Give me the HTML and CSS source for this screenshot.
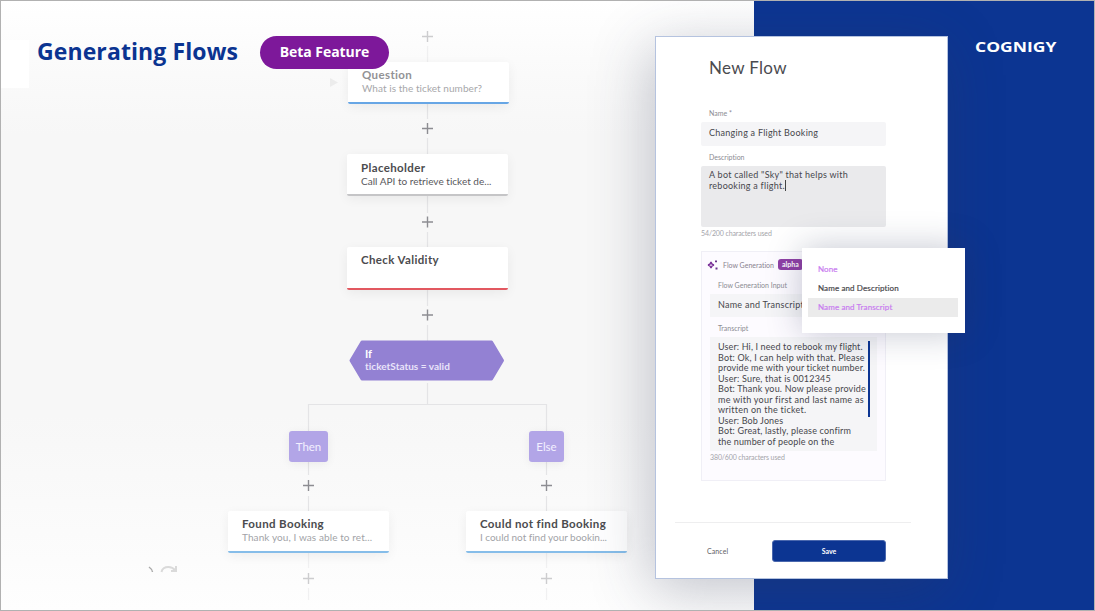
FILE: index.html
```html
<!DOCTYPE html>
<html lang="en">
<head>
<meta charset="utf-8">
<title>Generating Flows</title>
<link rel="stylesheet" href="styles.css">
</head>
<body>
<main class="slide">
  <section class="canvas">
    <div class="patch"></div>
    <svg class="wires" width="753" height="609" viewBox="1 1 753 609" fill="none">
      <g stroke="#e4e4e6" stroke-width="1.2">
        <path d="M427.500 104V119M427.500 138V154M427.500 196V213M427.500 232V247M427.500 290V306M427.500 325V341M427.500 383V404M308.500 432V404.500H546.500V432M308.500 462V475M308.500 496V511M546.500 462V475M546.500 496V511"/>
        <path opacity=".5" d="M427.500 46V62M308.500 553V568M308.500 588V600M546.500 553V568M546.500 588V600"/>
      </g>
      <g stroke="#8d8d92" stroke-width="1.400">
        <path d="M422 128.500h11M427.500 123v11M422 222h11M427.500 216.500v11M422 315h11M427.500 309.500v11M303 485.500h11M308.500 480v11M541 485.500h11M546.500 480v11"/>
        <path opacity=".43" d="M422 36.500h11M427.500 31v11M303 578.500h11M308.500 573v11M541 578.500h11M546.500 573v11"/>
      </g>
      <path fill="#ececec" d="M330 78l8 4.500-8 4.500z"/>
      <path stroke="#aaa" stroke-width="1.500" d="M149 567q3 2 3.500 5"/>
      <path stroke="#dadada" stroke-width="2" d="M161.500 572q1-5 7-5 4 0 7 3.500M176 566v5h-5"/>
      <path fill="#9381d3" stroke="#9381d3" stroke-width="3" stroke-linejoin="round" d="M362 342H491.500L502.500 360.500 491.500 379H362L351 360.500z"/>
    </svg>
    <article class="node question"><h2>Question</h2><p>What is the ticket number?</p></article>
    <article class="node placeholder"><h2>Placeholder</h2><p>Call API to retrieve ticket de...</p></article>
    <article class="node validity"><h2>Check Validity</h2></article>
    <div class="condition"><h2>If</h2><p>ticketStatus = valid</p></div>
    <div class="branch then">Then</div>
    <div class="branch else">Else</div>
    <article class="node found"><h2>Found Booking</h2><p>Thank you, I was able to ret...</p></article>
    <article class="node missing"><h2>Could not find Booking</h2><p>I could not find your bookin...</p></article>
    <header class="heading"><h1>Generating Flows</h1><span class="beta">Beta Feature</span></header>
  </section>
  <aside class="brand"><span class="logo">COGNIGY</span></aside>

  <section class="modal">
    <h2 class="modal-title">New Flow</h2>
    <form class="form">
      <label class="label">Name *</label>
      <div class="field name">Changing a Flight Booking</div>
      <label class="label desc-label">Description</label>
      <div class="field description">A bot called "Sky" that helps with<br><span class="caret">rebooking a flight.</span></div>
      <small class="count">54/200 characters used</small>
      <div class="generation">
        <div class="gen-head">
          <svg width="12" height="12" viewBox="0 0 12 12"><path d="M4 3Q4.500 5.500 7 6 4.500 6.500 4 9 3.500 6.500 1 6 3.500 5.500 4 3z" fill="none" stroke="#7b3299" stroke-width="1.400"/><path fill="#6d358c" d="M8 1.500h2v1.800H8zM8.500 8.500h2v2h-2z"/></svg>
          <span>Flow Generation</span><b class="alpha">alpha</b>
        </div>
        <label class="label gen-label">Flow Generation Input</label>
        <div class="select">Name and Transcript</div>
        <label class="label gen-label transcript-label">Transcript</label>
        <div class="transcript">
          <div class="lines">
            <span class="snug">User: Hi, I need to rebook my flight.</span>
            <span>Bot: Ok, I can help with that. Please</span>
            <span class="snug">provide me with your ticket number.</span>
            <span>User: Sure, that is 0012345</span>
            <span>Bot: Thank you. Now please provide</span>
            <span class="wide">me with your first and last name as</span>
            <span class="wide">written on the ticket.</span>
            <span class="snug">User: Bob Jones</span>
            <span>Bot: Great, lastly, please confirm</span>
            <span class="snug">the number of people on the</span>
          </div>
          <i class="scrollbar"></i>
        </div>
        <small class="count gen-count">380/600 characters used</small>
      </div>
    </form>
    <footer class="actions"><span class="cancel">Cancel</span><button class="save">Save</button></footer>
  </section>

  <ul class="menu">
    <li class="accent none">None</li>
    <li>Name and Description</li>
    <li class="accent active">Name and Transcript</li>
  </ul>
</main>
</body>
</html>
```
FILE: styles.css
```css
* { box-sizing: border-box; }
body { margin: 0; font-family: Lato, "Open Sans", sans-serif; font-variant-ligatures: none; }
h1, h2, p, ul { margin: 0; padding: 0; }

.slide {
  position: relative;
  display: grid;
  grid-template-columns: 753px 1fr;
  width: 1095px;
  height: 611px;
  border: 1px solid #b1b1b1;
  overflow: hidden;
}
.canvas {
  position: relative;
  background: linear-gradient(#fff, #fafafa 12%, #f7f7f7 22%, #f7f7f7 68%, #fcfcfc 92%, #fefefe);
}
.patch { position: absolute; top: 39px; width: 28px; height: 48px; background: #fff; }
.wires { position: absolute; left: 0; top: 0; }
.heading { position: relative; display: flex; align-items: center; gap: 22px; padding: 35px 0 0 36px; }
.heading h1 { font: 700 23px/30px "Open Sans", sans-serif; height: 33px; color: #0b3491; letter-spacing: .1px; width: 201px; white-space: nowrap; }
.beta {
  width: 129px;
  height: 33px;
  border-radius: 17px;
  background: #7d189a;
  color: #fff;
  font: 700 14px/32px "Open Sans", sans-serif;
  text-align: center;
  letter-spacing: -.05px;
}

.node {
  position: absolute;
  width: 161px;
  height: 42px;
  padding: 7px 14px;
  border-radius: 2px;
  background: #fff;
  border-bottom: 2px solid #c5c5c7;
  box-shadow: 0 3px 12px rgba(0, 0, 0, .06);
  white-space: nowrap;
}
.node h2 { font-size: 11.5px; line-height: 14px; font-weight: 700; color: #4b4b4e; letter-spacing: .37px; }
.node p { font-size: 10px; line-height: 13px; color: #58585c; letter-spacing: .02px; }
.question { left: 347px; top: 61px; padding-top: 6px; border-color: #67a6e5; }
.question h2 { color: #929295; }
.question p { color: #a7a7aa; letter-spacing: .06px; }
.placeholder { left: 346px; top: 153px; }
.validity { left: 346px; top: 246px; height: 43px; padding-top: 6px; border-color: #e25860; }
.found { left: 227px; top: 510px; padding-top: 6px; border-color: #86bde9; }
.missing { left: 465px; top: 510px; padding-top: 6px; border-color: #86bde9; }
.found p, .missing p { color: #a2a3a7; }
.found p { letter-spacing: .1px; }
.missing p { letter-spacing: -.03px; }

.condition { position: absolute; left: 364px; top: 346px; color: #fff; white-space: nowrap; }
.condition h2 { font-size: 11px; line-height: 13px; }
.condition p { font-size: 10px; line-height: 13px; font-weight: 700; color: #e9e4fa; letter-spacing: .03px; }
.branch {
  position: absolute;
  top: 430px;
  height: 31px;
  border-radius: 3px;
  background: #b2a5e7;
  color: #f3f0ff;
  font-size: 11.5px;
  line-height: 32px;
  text-align: center;
  box-shadow: 0 2px 10px rgba(0, 0, 0, .06);
}
.then { left: 288px; width: 39px; }
.else { left: 528px; width: 35px; }

.brand { background: #0c3592; padding: 37px 0 0 221px; }
.logo {
  display: block;
  width: 84px;
  color: #fff;
  font: 700 14px/17px "Open Sans", sans-serif;
  transform: scaleX(1.25);
  transform-origin: left;
}

.modal {
  position: absolute;
  left: 654px;
  top: 35px;
  width: 293px;
  height: 543px;
  display: flex;
  flex-direction: column;
  border: 1px solid #b5c3df;
  background: #fff;
  box-shadow: -5px 12px 55px rgba(50, 60, 85, .29);
}
.modal-title { padding: 20px 0 0 53px; font-size: 17px; line-height: 22px; font-weight: 400; color: #4b4b4f; letter-spacing: .32px; }
.form { width: 230px; padding: 29px 0 0 45px; }
.label { display: block; height: 14px; padding-left: 8px; font-size: 7px; line-height: 10px; color: #8b8b92; }
.field { padding-left: 8px; border-radius: 2px; background: #f5f5f7; color: #47474c; font-size: 9px; letter-spacing: .25px; }
.name { height: 24px; line-height: 22px; }
.desc-label { margin-top: 6px; }
.description { height: 61px; padding-top: 4px; background: #eaeaec; line-height: 10.5px; }
.caret { border-right: 1px solid #444; }
.count { display: block; font-size: 7px; line-height: 12px; color: #a4a4aa; letter-spacing: -.12px; }

.generation { height: 230px; margin-top: 12px; padding: 6px 8px 0 8px; border: 1px solid #f0eff6; background: #fdfbff; }
.gen-head { display: flex; align-items: center; height: 13px; margin-left: -3px; font-size: 7px; color: #89828f; white-space: nowrap; }
.gen-head span { width: 52px; margin-left: 4px; }
.alpha { height: 11px; margin-left: 3px; padding: 0 4px; border-radius: 3px; background: #8f40a5; color: #fff; line-height: 10px; }
.gen-label { height: 13px; margin-top: 9px; }
.select { height: 23px; margin-top: 1px; padding-left: 8px; background: #f5f5f7; font-size: 9px; line-height: 22px; color: #47474c; letter-spacing: .25px; white-space: nowrap; }
.transcript-label { margin-top: 6px; }
.transcript { display: flex; height: 114px; margin-top: 1px; padding: 4px 7px 0 8px; background: #f5f5f7; color: #47474c; }
.lines { display: flex; flex-direction: column; width: 149px; padding-top: 1px; font-size: 9px; line-height: 10.5px; letter-spacing: .18px; white-space: nowrap; }
.snug { letter-spacing: .13px; }
.wide { letter-spacing: .25px; }
.scrollbar { width: 2px; height: 76px; margin-left: 1px; background: #0c3592; }

.actions { display: flex; align-items: center; justify-content: space-between; width: 236px; height: 57px; margin: 41px 0 0 19px; padding: 0 25px 0 32px; border-top: 1px solid #eeeeef; font-size: 7px; color: #616166; }
.cancel { letter-spacing: .1px; }
.save { width: 114px; height: 22px; border: 1px solid #4a68ae; border-radius: 3px; background: #0c3592; color: #fff; font: 700 7px Lato, sans-serif; }

.menu {
  position: absolute;
  left: 801px;
  top: 247px;
  width: 163px;
  height: 85px;
  padding: 12px 7px 12px 6px;
  background: #fff;
  box-shadow: 0 0 35px rgba(40, 50, 85, .28);
  list-style: none;
  font-size: 8px;
  color: #4a4a4e;
  letter-spacing: .12px;
}
.menu li { height: 19px; padding-left: 10px; line-height: 19px; -webkit-text-stroke: .2px; }
.menu .accent { color: #c97df0; }
.menu .active { background: #ebebeb; }
```
